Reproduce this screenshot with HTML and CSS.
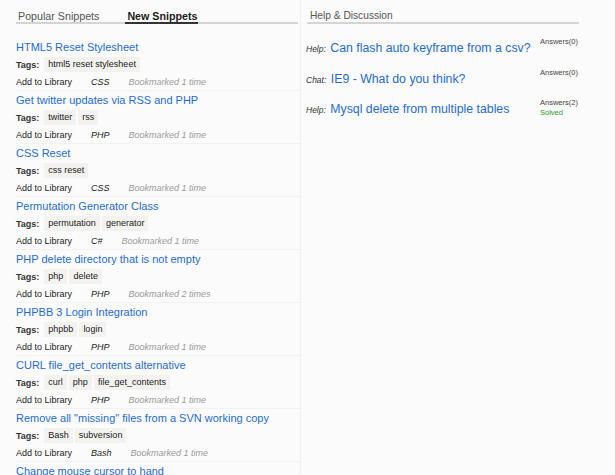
FILE: index.html
```html
<!DOCTYPE html>
<html>
<head>
<meta charset="utf-8">
<link rel="stylesheet" href="styles.css">
</head>
<body>
<div class="page">
  <div class="left">
    <div class="tabs">
      <span class="tab">Popular Snippets</span>
      <span class="tab active">New Snippets</span>
    </div>
    <ul class="snippets">
      <li class="snip">
        <a class="title">HTML5 Reset Stylesheet</a>
        <div class="tags"><b>Tags:</b><span class="tag">html5 reset stylesheet</span></div>
        <div class="meta"><span>Add to Library</span><i class="lang">CSS</i><i class="bm">Bookmarked 1 time</i></div>
      </li>
      <li class="snip">
        <a class="title">Get twitter updates via RSS and PHP</a>
        <div class="tags"><b>Tags:</b><span class="tag">twitter</span><span class="tag">rss</span></div>
        <div class="meta"><span>Add to Library</span><i class="lang">PHP</i><i class="bm">Bookmarked 1 time</i></div>
      </li>
      <li class="snip">
        <a class="title">CSS Reset</a>
        <div class="tags"><b>Tags:</b><span class="tag">css reset</span></div>
        <div class="meta"><span>Add to Library</span><i class="lang">CSS</i><i class="bm">Bookmarked 1 time</i></div>
      </li>
      <li class="snip">
        <a class="title">Permutation Generator Class</a>
        <div class="tags"><b>Tags:</b><span class="tag">permutation</span><span class="tag">generator</span></div>
        <div class="meta"><span>Add to Library</span><i class="lang">C#</i><i class="bm">Bookmarked 1 time</i></div>
      </li>
      <li class="snip">
        <a class="title">PHP delete directory that is not empty</a>
        <div class="tags"><b>Tags:</b><span class="tag">php</span><span class="tag">delete</span></div>
        <div class="meta"><span>Add to Library</span><i class="lang">PHP</i><i class="bm">Bookmarked 2 times</i></div>
      </li>
      <li class="snip">
        <a class="title">PHPBB 3 Login Integration</a>
        <div class="tags"><b>Tags:</b><span class="tag">phpbb</span><span class="tag">login</span></div>
        <div class="meta"><span>Add to Library</span><i class="lang">PHP</i><i class="bm">Bookmarked 1 time</i></div>
      </li>
      <li class="snip">
        <a class="title">CURL file_get_contents alternative</a>
        <div class="tags"><b>Tags:</b><span class="tag">curl</span><span class="tag">php</span><span class="tag">file_get_contents</span></div>
        <div class="meta"><span>Add to Library</span><i class="lang">PHP</i><i class="bm">Bookmarked 1 time</i></div>
      </li>
      <li class="snip">
        <a class="title">Remove all "missing" files from a SVN working copy</a>
        <div class="tags"><b>Tags:</b><span class="tag">Bash</span><span class="tag">subversion</span></div>
        <div class="meta"><span>Add to Library</span><i class="lang">Bash</i><i class="bm">Bookmarked 1 time</i></div>
      </li>
      <li class="snip last">
        <a class="title">Change mouse cursor to hand</a>
      </li>
    </ul>
  </div>
  <div class="right">
    <div class="heading">Help &amp; Discussion</div>
    <ul class="questions">
      <li class="q">
        <div class="q-main"><i class="kind">Help:</i> <a class="q-title">Can flash auto keyframe from a csv?</a></div>
        <div class="q-meta"><div>Answers(0)</div></div>
      </li>
      <li class="q">
        <div class="q-main"><i class="kind">Chat:</i> <a class="q-title">IE9 - What do you think?</a></div>
        <div class="q-meta"><div>Answers(0)</div></div>
      </li>
      <li class="q">
        <div class="q-main"><i class="kind">Help:</i> <a class="q-title">Mysql delete from multiple tables</a></div>
        <div class="q-meta"><div>Answers(2)</div><div class="solved">Solved</div></div>
      </li>
    </ul>
  </div>
</div>
</body>
</html>
```
FILE: styles.css
```css
html, body {
  margin: 0;
  padding: 0;
  background: #fbfbfb;
  font-family: "Liberation Sans", Arial, sans-serif;
  color: #1c1c1c;
  overflow: hidden;
}
ul { list-style: none; margin: 0; padding: 0; }
a { color: #1f6bd0; text-decoration: none; }

.page {
  display: flex;
  align-items: flex-start;
}

.left {
  width: 284px;
  padding-left: 16px;
  border-right: 1px solid #f0f0f0;
  min-height: 475px;
}

.tabs {
  display: flex;
  padding-top: 10px;
  border-bottom: 2px solid #d4d4d4;
  margin-right: 2px;
}
.tab {
  font-size: 10.7px;
  line-height: 12px;
  color: #555;
  padding: 0 1px 0 2px;
  margin-bottom: -2px;
  border-bottom: 2px solid transparent;
}
.tab.active {
  margin-left: 25px;
  font-weight: bold;
  color: #1c1c1c;
  border-bottom-color: #333;
}

.snippets { margin-top: 14px; }
.snip {
  border-bottom: 1px solid #f2f2f2;
}
.snip.last { border-bottom: 0; }
.title {
  display: block;
  font-size: 11px;
  line-height: 18px;
}
.tags, .meta {
  display: flex;
  align-items: center;
  height: 17px;
  font-size: 9px;
}
.tags b { margin-right: 5px; color: #333; }
.tag {
  background: #f3f2ef;
  padding: 2px 4px;
  margin-right: 2px;
  line-height: 11px;
}
.meta .lang { margin-left: 19px; color: #1c1c1c; }
.meta .bm { margin-left: 19px; color: #9a9a9a; }

.right {
  width: 276px;
  padding-left: 5px;
}
.heading {
  margin: 0 3px 0 1px;
  padding: 10px 0 0 3px;
  font-size: 10.2px;
  line-height: 12px;
  color: #555;
  border-bottom: 2px solid #d4d4d4;
}
.questions { margin-top: 14px; }
.q {
  display: flex;
  align-items: flex-start;
  margin-bottom: 12.5px;
}
.q-main {
  width: 234px;
  height: 18px;
  line-height: 18px;
  white-space: nowrap;
}
.kind { font-size: 8.5px; color: #333; }
.q-title { font-size: 12.3px; }
.q-meta {
  margin-top: -1px;
  font-size: 7.5px;
  line-height: 10px;
  color: #444;
}
.solved { color: #2a9a2a; }
```
